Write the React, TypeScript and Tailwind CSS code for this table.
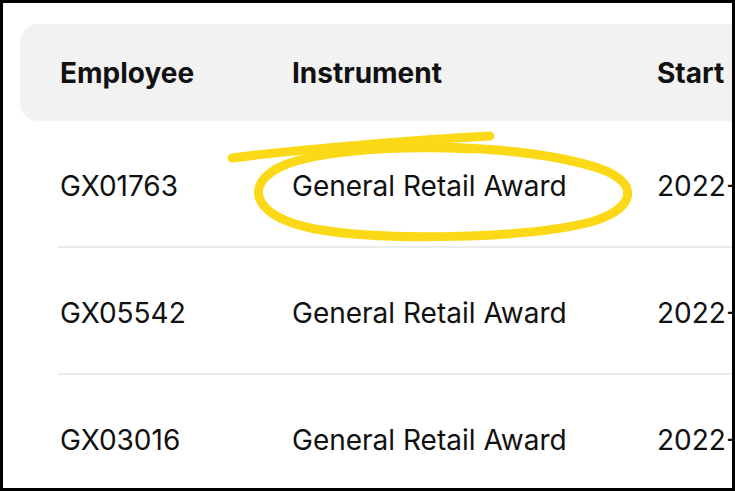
const rows = [
  { id: "GX01763", instrument: "General Retail Award", start: "2022-03-14" },
  { id: "GX05542", instrument: "General Retail Award", start: "2022-05-02" },
  { id: "GX03016", instrument: "General Retail Award", start: "2022-07-18" },
]

function Scribble() {
  // hand-drawn highlighter loop around the first instrument cell
  return (
    <svg
      className="pointer-events-none absolute left-0 top-0"
      width="735"
      height="491"
      viewBox="0 0 735 491"
      fill="none"
    >
      <path
        d="M229 155 C 300 146, 410 137, 487 133"
        stroke="#fcd916"
        strokeWidth="9"
        strokeLinecap="round"
      />
      <path
        d="M470 146 C 390 142, 300 148, 270 168 C 243 186, 252 214, 312 226 C 380 238, 520 236, 588 219 C 634 205, 636 180, 598 166 C 560 153, 500 146, 440 144"
        stroke="#fcd916"
        strokeWidth="9"
        strokeLinecap="round"
      />
    </svg>
  )
}

export default function App() {
  return (
    <div
      className="relative h-[491px] w-[735px] overflow-hidden border-[3px] border-black bg-white text-[#111]"
      style={{ fontFamily: "Inter, 'Noto Sans', sans-serif" }}
    >
      <div className="ml-[17px] mt-[21px] w-[1000px]">
        <div className="grid h-[97px] grid-cols-[232px_365px_1fr] items-center rounded-l-[18px] bg-[#f2f2f2] pl-[40px] text-[28px] font-bold">
          <div>Employee</div>
          <div>Instrument</div>
          <div>Start</div>
        </div>
        {rows.map((r) => (
          <div
            key={r.id}
            className="ml-[38px] grid h-[127px] grid-cols-[232px_365px_1fr] items-center border-b-2 border-[#ebebeb] pl-[2px] pt-[4px] text-[28px]"
          >
            <div>{r.id}</div>
            <div>{r.instrument}</div>
            <div className="whitespace-nowrap">{r.start}</div>
          </div>
        ))}
      </div>
      <Scribble />
    </div>
  )
}
